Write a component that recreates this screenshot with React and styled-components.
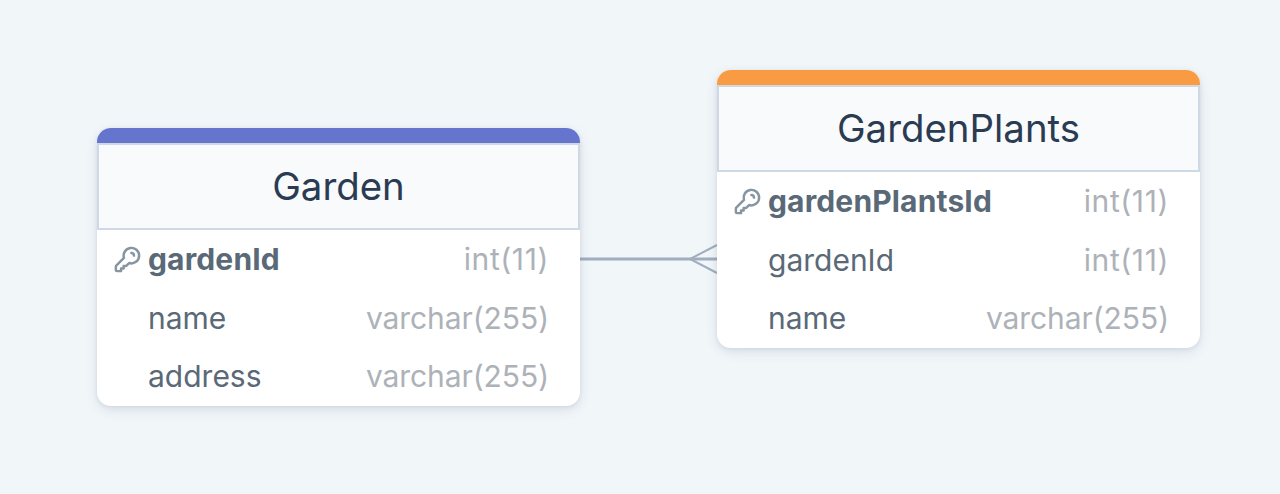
import React from "react";
import styled, { createGlobalStyle } from "styled-components";

const GlobalStyle = createGlobalStyle`
  html, body {
    margin: 0;
    padding: 0;
    background: #f1f6f9;
    font-family: "Inter", "Liberation Sans", sans-serif;
  }
`;

const Canvas = styled.div`
  position: relative;
  width: 1280px;
  height: 494px;
  overflow: hidden;
  background: #f1f6f9;
`;

const Edge = styled.svg`
  position: absolute;
  left: 0;
  top: 0;
`;

const Table = styled.div`
  position: absolute;
  left: ${(p) => p.$x}px;
  top: ${(p) => p.$y}px;
  width: 483px;
  height: 278px;
  box-sizing: border-box;
  display: flex;
  flex-direction: column;
  background: #fff;
  border-radius: 14px;
  box-shadow: 0 4px 12px rgba(60, 80, 110, 0.13), 0 1px 4px rgba(60, 80, 110, 0.09);
`;

const Strip = styled.div`
  height: 15px;
  flex: none;
  background: ${(p) => p.$color};
  border-radius: 14px 14px 0 0;
`;

const Title = styled.div`
  height: 87px;
  flex: none;
  box-sizing: border-box;
  display: flex;
  align-items: center;
  justify-content: center;
  padding-bottom: 2px;
  background: #f8fafc;
  border: 2px solid #cfd9e6;
  font-size: 38.4px;
  font-weight: 400;
  color: #2a3b52;
`;

const Rows = styled.div`
  flex: 1;
  display: flex;
  flex-direction: column;
`;

const Row = styled.div`
  height: 58.6px;
  display: flex;
  align-items: center;
  padding: 0 31px 0 16px;
  font-size: 30px;
  color: #5a6977;
`;

const KeySlot = styled.div`
  width: 35px;
  flex: none;
  display: flex;
  align-items: center;
  margin-left: -1px;
  margin-right: 1px;
`;

const Name = styled.span`
  flex: 1;
  font-weight: ${(p) => (p.$primary ? 700 : 400)};
  letter-spacing: ${(p) => (p.$primary ? "0.15px" : "0")};
`;

const Type = styled.span`
  color: #adb2b8;
  letter-spacing: ${(p) => (p.$short ? "0.6px" : "-0.08px")};
`;

const KeyIcon = () => (
  <svg width="31" height="31" viewBox="0 0 24 24" fill="none" stroke="#8795a1" strokeWidth="1.9" strokeLinecap="round" strokeLinejoin="round">
    <path d="M15 7a2 2 0 012 2m4 0a6 6 0 01-7.743 5.743L11 17H9v2H7v2H4a1 1 0 01-1-1v-2.586a1 1 0 01.293-.707l5.964-5.964A6 6 0 1121 9z" />
  </svg>
);

const tables = [
  {
    name: "Garden",
    x: 97,
    y: 128,
    color: "#6574cd",
    columns: [
      { name: "gardenId", type: "int(11)", primary: true },
      { name: "name", type: "varchar(255)" },
      { name: "address", type: "varchar(255)" },
    ],
  },
  {
    name: "GardenPlants",
    x: 717,
    y: 70,
    color: "#f99b42",
    columns: [
      { name: "gardenPlantsId", type: "int(11)", primary: true },
      { name: "gardenId", type: "int(11)" },
      { name: "name", type: "varchar(255)" },
    ],
  },
];

export default function App() {
  return (
    <Canvas>
      <GlobalStyle />
      <Edge width="1280" height="494" fill="none" stroke="#a0aec0" strokeWidth="2">
        <path d="M580 259H717" strokeWidth="3" />
        <path d="M717 245L690 259L717 273" />
      </Edge>
      {tables.map((t) => (
        <Table key={t.name} $x={t.x} $y={t.y}>
          <Strip $color={t.color} />
          <Title>{t.name}</Title>
          <Rows>
            {t.columns.map((c) => (
              <Row key={c.name}>
                <KeySlot>{c.primary && <KeyIcon />}</KeySlot>
                <Name $primary={c.primary}>{c.name}</Name>
                <Type $short={c.type.startsWith("int")}>{c.type}</Type>
              </Row>
            ))}
          </Rows>
        </Table>
      ))}
    </Canvas>
  );
}
